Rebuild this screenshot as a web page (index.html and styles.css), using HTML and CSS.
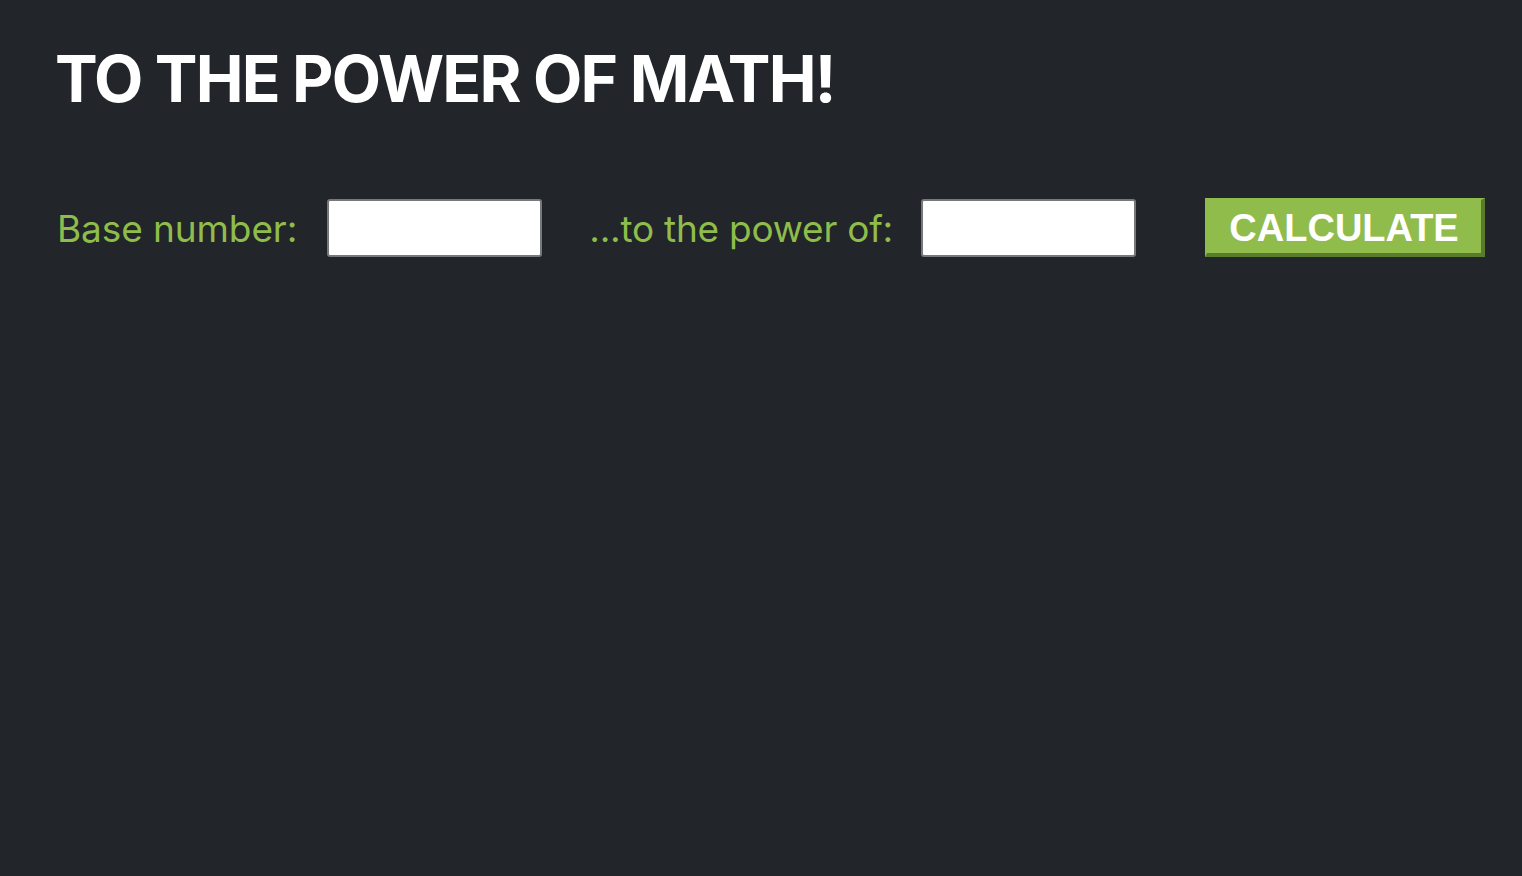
FILE: index.html
```html
<!DOCTYPE html>
<html>
<head>
<meta charset="utf-8">
<link rel="stylesheet" href="styles.css">
</head>
<body>
<main class="page">
  <h1 class="title">TO THE POWER OF MATH!</h1>
  <form class="calc">
    <label class="label" for="base">Base number:</label>
    <input class="field" id="base" type="text">
    <label class="label label-power" for="power">...to the power of:</label>
    <input class="field field-power" id="power" type="text">
    <button class="btn" type="button">CALCULATE</button>
  </form>
</main>
</body>
</html>
```
FILE: styles.css
```css
html, body {
  margin: 0;
  padding: 0;
  background: #222529;
  height: 100%;
}
.page {
  padding: 40px 57px;
  font-family: Inter, "Liberation Sans", sans-serif;
}
.title {
  margin: 0 0 0 -2px;
  color: #ffffff;
  font-size: 64px;
  font-weight: 700;
  letter-spacing: -1.8px;
  line-height: 78px;
}
.calc {
  display: flex;
  align-items: center;
  margin-top: 80px;
}
.label {
  flex-shrink: 0;
  white-space: nowrap;
  color: #8fbc4b;
  font-size: 37px;
  letter-spacing: -0.1px;
  padding-top: 2px;
}
.label-power {
  margin-left: 47px;
  letter-spacing: -0.25px;
}
.field {
  flex-shrink: 0;
  box-sizing: border-box;
  width: 215px;
  height: 58px;
  margin-left: 30px;
  border: 2px solid #76787c;
  border-radius: 3px;
  background: #ffffff;
}
.field-power {
  margin-left: 28px;
}
.btn {
  flex-shrink: 0;
  box-sizing: border-box;
  margin-left: 69px;
  width: 280px;
  height: 59px;
  padding: 4px 0 0;
  background: #8fbc4b;
  border-style: solid;
  border-width: 2px 4px 4px 2px;
  border-color: #8fbc4b #5b7b2c #5b7b2c #8fbc4b;
  color: #ffffff;
  font-family: "Liberation Sans", Arial, sans-serif;
  font-weight: 700;
  font-size: 38px;
  cursor: pointer;
}
```
